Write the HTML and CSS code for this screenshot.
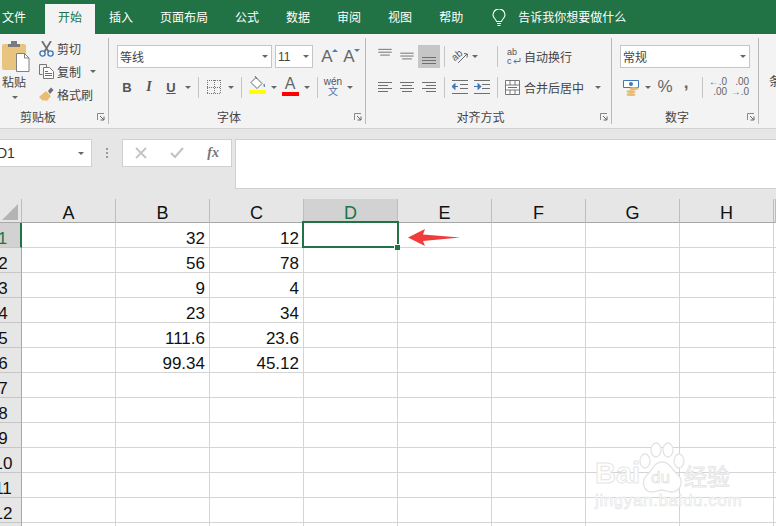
FILE: index.html
```html
<!DOCTYPE html>
<html lang="zh-CN">
<head>
    <meta charset="UTF-8">
    <title>Excel</title>
    <link rel="stylesheet" href="styles.css">
</head>
<body>
    <!-- Tabs -->
    <div class="tabs">
        <div class="tab tab-first">文件</div>
        <div class="tab tab-active">开始</div>
        <div class="tab">插入</div>
        <div class="tab">页面布局</div>
        <div class="tab">公式</div>
        <div class="tab">数据</div>
        <div class="tab">审阅</div>
        <div class="tab">视图</div>
        <div class="tab">帮助</div>
        <svg class="bulb" width="14" height="18" viewBox="0 0 14 18"><path d="M4.500 12.500C4 10 1 9 1 6a6 6 0 0 1 12 0c0 3-3 4-3.500 6.500z" fill="none" stroke="#fff" stroke-width="1.100"/><path d="M5 14.500h4M5.500 16.500h3" stroke="#fff" stroke-width="1.200"/></svg>
        <div class="tell">告诉我你想要做什么</div>
    </div>

    <!-- Ribbon -->
    <div class="ribbon">
        <div class="group group-clip">
            <div class="clip-body">
                <div class="paste">
                    <svg width="28" height="31" viewBox="0 0 28 31"><rect x="0" y="3" width="24" height="26" rx="2" fill="#e9c47f"/><path d="M6 6V3h3V0h6v3h3v3z" fill="#7b7b7b"/><path d="M14.500 12.500h8l4.500 4.500v13.500h-12.500z" fill="#fff" stroke="#808080"/><path d="M22.500 12.500v4.500h4.500" fill="none" stroke="#808080"/></svg>
                    <div class="paste-label">粘贴</div>
                    <span class="caret paste-caret"></span>
                </div>
                <div class="clip-list">
                    <div class="clip-row">
                        <svg width="15" height="16" viewBox="0 0 15 16"><path d="M3 0l6.500 10.500M12 0L5.500 10.500" stroke="#707070" stroke-width="1.800"/><circle cx="3.500" cy="12.500" r="2.600" fill="none" stroke="#3f78b5" stroke-width="1.400"/><circle cx="11.500" cy="12.500" r="2.600" fill="none" stroke="#3f78b5" stroke-width="1.400"/></svg>
                        <span>剪切</span>
                    </div>
                    <div class="clip-row">
                        <svg width="15" height="15" viewBox="0 0 15 15"><path d="M.5.500h7v3M.5.500v10h3" fill="none" stroke="#777"/><path d="M4.500 3.500h6l4 4v7h-10z" fill="#fff" stroke="#777"/><path d="M6 7.500h3M6 9.500h7M6 11.500h7" stroke="#3f78b5"/></svg>
                        <span>复制</span>
                        <span class="caret copy-caret"></span>
                    </div>
                    <div class="clip-row">
                        <svg width="15" height="15" viewBox="0 0 15 15"><path d="M0 10l7-6 5 5-4 5-3-1-1 1z" fill="#e6bd73"/><path d="M9 4l3-3.500 2.500 2.500L11 7z" fill="#6f6f6f"/></svg>
                        <span>格式刷</span>
                    </div>
                </div>
            </div>
            <div class="group-foot">
                <div class="group-name group-name-clip">剪贴板</div>
                <div class="launcher"><svg width="8" height="8" viewBox="0 0 8 8"><path d="M.5 7V.5H7" fill="none" stroke="#888"/><path d="M3 3l4 4M7 3.500V7H3.500" fill="none" stroke="#666"/></svg></div>
            </div>
        </div>

        <div class="group group-font">
            <div class="row row-top">
                <div class="select font-name"><span>等线</span><i class="caret"></i></div>
                <div class="select font-size"><span>11</span><i class="caret"></i></div>
                <div class="btn grow-a">A<i class="mini-up"></i></div>
                <div class="btn shrink-a">A<i class="mini-down"></i></div>
            </div>
            <div class="row row-bottom row-font">
                <div class="btn letter"><b>B</b></div>
                <div class="btn letter"><em>I</em></div>
                <div class="btn letter"><u>U</u></div>
                <div class="drop"><i class="caret"></i></div>
                <div class="sep"></div>
                <div class="btn">
                    <svg class="crisp" width="14" height="14" viewBox="0 0 14 14"><path d="M.5 0v14M13.500 0v14M7 0v14M0 .500h14M0 13.500h14M0 7h14" fill="none" stroke="#777" stroke-dasharray="1 1"/></svg>
                </div>
                <div class="drop"><i class="caret"></i></div>
                <div class="sep"></div>
                <div class="btn color-btn">
                    <svg width="17" height="13" viewBox="0 0 17 13"><path d="M7 1.500l6 6-5 5-6-6z" fill="#fff" stroke="#666"/><path d="M6 0l2 3" stroke="#666"/><path d="M15 7.500c1 1.500 1.500 2.500.5 3.500-1 0-1.500-2-.5-3.500z" fill="#3f78b5"/></svg>
                    <i class="bar bar-yellow"></i>
                </div>
                <div class="drop"><i class="caret"></i></div>
                <div class="btn color-btn color-a">
                    <span>A</span>
                    <i class="bar bar-red"></i>
                </div>
                <div class="drop"><i class="caret"></i></div>
                <div class="sep"></div>
                <div class="btn wen"><span>wén</span><span class="wen-zi">文</span></div>
                <div class="drop"><i class="caret"></i></div>
            </div>
            <div class="group-foot">
                <div class="group-name">字体</div>
                <div class="launcher"><svg width="8" height="8" viewBox="0 0 8 8"><path d="M.5 7V.5H7" fill="none" stroke="#888"/><path d="M3 3l4 4M7 3.500V7H3.500" fill="none" stroke="#666"/></svg></div>
            </div>
        </div>

        <div class="group group-align">
            <div class="row row-top">
                <div class="btn"><svg width="14" height="23" viewBox="0 0 14 23"><path d="M0 3.500h14M0 6.500h14M2 9.500h10" stroke="#6f6f6f"/></svg></div>
                <div class="btn"><svg width="14" height="23" viewBox="0 0 14 23"><path d="M0 7.500h14M0 10.500h14M2 13.500h10" stroke="#6f6f6f"/></svg></div>
                <div class="btn btn-on"><svg width="14" height="23" viewBox="0 0 14 23"><path d="M0 12.500h14M0 15.500h14M0 18.500h14" stroke="#6f6f6f"/></svg></div>
                <div class="sep"></div>
                <div class="btn"><svg width="17" height="17" viewBox="0 0 17 17"><text x="0" y="10" class="orient" transform="rotate(-40 6 8)">ab</text><path d="M6 15L15 6M12 5.500l3.500.500-.5 3.500" fill="none" stroke="#666"/></svg></div>
                <div class="drop drop-tight"><i class="caret"></i></div>
                <div class="sep sep-push"></div>
                <div class="btn-text wrap-text">
                    <svg width="14" height="17" viewBox="0 0 14 17"><text x="0" y="7" class="abc">ab</text><text x="0" y="16" class="abc">c</text><path d="M13 10v3.500H7M9 11.500l-2 2 2 2" fill="none" stroke="#3f78b5"/></svg>
                    <span>自动换行</span>
                </div>
            </div>
            <div class="row row-bottom">
                <div class="btn"><svg width="14" height="12" viewBox="0 0 14 12"><path d="M0 1.500h14M0 4.500h10M0 7.500h14M0 10.500h10" stroke="#6f6f6f"/></svg></div>
                <div class="btn"><svg width="14" height="12" viewBox="0 0 14 12"><path d="M0 1.500h14M2 4.500h10M0 7.500h14M2 10.500h10" stroke="#6f6f6f"/></svg></div>
                <div class="btn"><svg width="14" height="12" viewBox="0 0 14 12"><path d="M0 1.500h14M4 4.500h10M0 7.500h14M4 10.500h10" stroke="#6f6f6f"/></svg></div>
                <div class="sep"></div>
                <div class="btn"><svg width="16" height="14" viewBox="0 0 16 14"><path d="M0 .500h16M8 4.500h8M8 8.500h8M0 13.500h16" stroke="#6f6f6f"/><path d="M0 6.500h6M3 3.500l-3 3 3 3z" stroke="#3f78b5" fill="#3f78b5"/></svg></div>
                <div class="btn"><svg width="16" height="14" viewBox="0 0 16 14"><path d="M0 .500h16M8 4.500h8M8 8.500h8M0 13.500h16" stroke="#6f6f6f"/><path d="M0 6.500h5M4 3.500l3 3-3 3z" stroke="#3f78b5" fill="#3f78b5"/></svg></div>
                <div class="sep"></div>
                <div class="btn-text merge-text">
                    <svg width="15" height="15" viewBox="0 0 15 15"><path d="M.5.500h14v14H.500zM.5 5h14M.5 10h14M5 .500V5M10 .500V5M5 10v4.500M10 10v4.500" fill="#fff" stroke="#777"/><path d="M3 7.500h9" stroke="#3f78b5"/></svg>
                    <span>合并后居中</span>
                </div>
                <div class="drop drop-merge"><i class="caret"></i></div>
            </div>
            <div class="group-foot">
                <div class="group-name">对齐方式</div>
                <div class="launcher"><svg width="8" height="8" viewBox="0 0 8 8"><path d="M.5 7V.5H7" fill="none" stroke="#888"/><path d="M3 3l4 4M7 3.500V7H3.500" fill="none" stroke="#666"/></svg></div>
            </div>
        </div>

        <div class="group group-number">
            <div class="row row-top">
                <div class="select number-format"><span>常规</span><i class="caret"></i></div>
            </div>
            <div class="row row-bottom">
                <div class="btn">
                    <svg width="17" height="17" viewBox="0 0 17 17"><path d="M.5 1.500h15v7H.5z" fill="#fff" stroke="#3f78b5"/><circle cx="8" cy="5" r="2" fill="#3f78b5"/><ellipse cx="11" cy="9.500" rx="4.500" ry="1.500" fill="#e6bd73"/><ellipse cx="8" cy="12.500" rx="4.500" ry="1.500" fill="#e6bd73"/><ellipse cx="8" cy="15.500" rx="4.500" ry="1.500" fill="#e6bd73"/></svg>
                </div>
                <div class="drop"><i class="caret"></i></div>
                <div class="btn percent">%</div>
                <div class="btn comma">,</div>
                <div class="sep"></div>
                <div class="btn">
                    <div class="dec"><span class="dec-top"><i class="dec-left">←</i>.0</span><span>.00</span></div>
                </div>
                <div class="btn">
                    <div class="dec"><span>.00</span><span class="dec-top"><i class="dec-left">→</i>.0</span></div>
                </div>
            </div>
            <div class="group-foot">
                <div class="group-name">数字</div>
                <div class="launcher"><svg width="8" height="8" viewBox="0 0 8 8"><path d="M.5 7V.5H7" fill="none" stroke="#888"/><path d="M3 3l4 4M7 3.500V7H3.500" fill="none" stroke="#666"/></svg></div>
            </div>
        </div>

        <div class="group-cut">条</div>
    </div>

    <!-- Formula bar -->
    <div class="formula-bar">
        <div class="name-box"><span>D1</span><i class="caret"></i></div>
        <div class="dots"></div>
        <div class="fx-box">
            <svg width="12" height="12" viewBox="0 0 12 12"><path d="M1 1l10 10M11 1L1 11" stroke="#c4c4c4" stroke-width="1.800"/></svg>
            <svg width="14" height="12" viewBox="0 0 14 12"><path d="M1 6l4 4 8-9" fill="none" stroke="#c4c4c4" stroke-width="2.200"/></svg>
            <span class="fx">fx</span>
        </div>
        <div class="formula-input"></div>
    </div>

    <!-- Sheet -->
    <div class="sheet">
        <div class="corner"><i class="corner-mark"></i></div><div class="col">A</div><div class="col">B</div><div class="col">C</div><div class="col col-on">D</div><div class="col">E</div><div class="col">F</div><div class="col">G</div><div class="col">H</div><div class="col"></div>
        <div class="rh rh-on">1</div><div></div><div>32</div><div>12</div><div class="active-cell"><i class="handle"></i></div><div></div><div></div><div></div><div></div><div></div>
        <div class="rh">2</div><div></div><div>56</div><div>78</div><div></div><div></div><div></div><div></div><div></div><div></div>
        <div class="rh">3</div><div></div><div>9</div><div>4</div><div></div><div></div><div></div><div></div><div></div><div></div>
        <div class="rh">4</div><div></div><div>23</div><div>34</div><div></div><div></div><div></div><div></div><div></div><div></div>
        <div class="rh">5</div><div></div><div>111.6</div><div>23.6</div><div></div><div></div><div></div><div></div><div></div><div></div>
        <div class="rh">6</div><div></div><div>99.34</div><div>45.12</div><div></div><div></div><div></div><div></div><div></div><div></div>
        <div class="rh">7</div><div></div><div></div><div></div><div></div><div></div><div></div><div></div><div></div><div></div>
        <div class="rh">8</div><div></div><div></div><div></div><div></div><div></div><div></div><div></div><div></div><div></div>
        <div class="rh">9</div><div></div><div></div><div></div><div></div><div></div><div></div><div></div><div></div><div></div>
        <div class="rh">10</div><div></div><div></div><div></div><div></div><div></div><div></div><div></div><div></div><div></div>
        <div class="rh">11</div><div></div><div></div><div></div><div></div><div></div><div></div><div></div><div></div><div></div>
        <div class="rh">12</div><div></div><div></div><div></div><div></div><div></div><div></div><div></div><div></div><div></div>
        <div class="rh"></div><div></div><div></div><div></div><div></div><div></div><div></div><div></div><div></div><div></div>
    </div>

    <!-- Red arrow drawn over the sheet -->
    <svg class="arrow" width="54" height="18" viewBox="0 0 54 18"><path d="M0 8.500L17 0l-2 5.500L52 8.500 15 12l2 5z" fill="#f23b3b"/></svg>

    <!-- Watermark -->
    <div class="watermark">
        <svg class="paw" width="50" height="56" viewBox="0 0 50 56"><g fill="#fff" stroke="#e4e4e4" stroke-width="1.300"><ellipse cx="6" cy="19" rx="5" ry="7"/><ellipse cx="17" cy="8" rx="5" ry="7"/><ellipse cx="29" cy="8" rx="5" ry="7"/><ellipse cx="40" cy="19" rx="5" ry="7"/><path d="M23 20c8 0 10 8 16 13 6 6 3 17-7 17-4 0-6-2-9-2s-6 2-10 2C4 50 2 39 8 33c6-5 7-13 15-13z"/></g></svg>
        <span class="wm-bai">Bai</span><span class="wm-du">du</span><span class="wm-jy">经验</span>
        <div class="wm-url">jingyan.baidu.com</div>
    </div>
</body>
</html>
```

FILE: styles.css
```css
body {
    margin: 0;
    width: 776px;
    height: 526px;
    overflow: hidden;
    position: relative;
    background-color: #e6e6e6;
    font-family: "Liberation Sans", "Noto Sans CJK SC", sans-serif;
    font-size: 12px;
    color: #444;
}
i { font-style: normal; }

/* Tabs */
.tabs {
    display: flex;
    height: 34px;
    background-color: #217346;
    color: #fff;
}
.tab {
    padding: 0 13px;
    margin-right: 1px;
    line-height: 36px;
    white-space: nowrap;
}
.tab-first { margin-left: -11px; margin-right: 6px; }
.tab-active {
    margin-top: 4px;
    height: 30px;
    line-height: 28px;
    background-color: #f3f3f3;
    color: #217346;
}
.bulb { margin: 9px 0 0 15px; }
.tell { margin-left: 12px; line-height: 36px; }

/* Ribbon */
.ribbon {
    display: flex;
    height: 95px;
    padding-top: 4px;
    box-sizing: border-box;
    background-color: #f3f3f3;
    border-bottom: 1px solid #d2d2d2;
}
.group {
    display: flex;
    flex-direction: column;
    flex-shrink: 0;
    height: 86px;
    box-sizing: border-box;
    border-right: 1px solid #b9b9b9;
}
.group-clip { width: 109px; }
.group-font { width: 257px; }
.group-align { width: 246px; }
.group-number { width: 147px; }
.group-cut { margin: 36px 0 0 10px; line-height: 16px; white-space: nowrap; }

.group-foot {
    display: flex;
    margin-top: auto;
    height: 14px;
    line-height: 16px;
}
.group-name { flex: 1; text-align: center; }
.group-name-clip { padding-right: 16px; }
.launcher { width: 11px; padding-left: 5px; }
.launcher svg { display: block; margin-top: 3px; }

.row { display: flex; align-items: center; }
.row-top { height: 23px; margin-top: 7px; }
.row-bottom { height: 22px; margin-top: 8px; }
.group-font .row-top { padding-left: 8px; }
.row-font { padding-left: 7px; }
.group-align .row { padding-left: 8px; }
.group-number .row { padding-left: 8px; }

.caret {
    display: inline-block;
    width: 0;
    height: 0;
    border-left: 3px solid transparent;
    border-right: 3px solid transparent;
    border-top: 3px solid #666;
}
.btn {
    display: flex;
    flex-direction: column;
    align-items: center;
    justify-content: center;
    width: 22px;
    height: 22px;
    flex-shrink: 0;
}
.btn-on { height: 23px; background-color: #c6c6c6; }
.crisp { shape-rendering: crispEdges; }
.drop {
    display: flex;
    justify-content: center;
    align-items: center;
    width: 11px;
    height: 22px;
}
.drop-tight { width: 7px; }
.drop-merge { margin-left: 8px; }
.sep {
    width: 1px;
    height: 21px;
    margin: 0 4px 0 5px;
    background-color: #c6c6c6;
}
.group-align .sep { margin-left: 4px; margin-right: 4px; width: 1px; }
.group-align .sep-push { margin-left: 19px; }
.btn-text { display: flex; align-items: center; white-space: nowrap; font-size: 12px; }
.wrap-text { margin-left: 5px; gap: 3px; }
.merge-text { margin-left: 3px; gap: 4px; }

.select {
    display: flex;
    align-items: center;
    justify-content: space-between;
    box-sizing: border-box;
    height: 23px;
    padding: 0 3px 0 2px;
    background-color: #fff;
    border: 1px solid #c6c6c6;
    color: #444;
}
.font-name { width: 155px; }
.font-size { width: 38px; margin: 0 3px; }
.number-format { width: 130px; }

/* Clipboard */
.clip-body { display: flex; }
.paste { width: 32px; padding-top: 3px; }
.paste svg { display: block; margin-left: 2px; }
.paste-label { margin: 3px 0 0 2px; line-height: 16px; }
.paste-caret { display: block; margin: 5px 0 0 12px; }
.clip-list { margin-left: 7px; }
.clip-row { display: flex; align-items: center; gap: 3px; height: 23px; white-space: nowrap; }
.clip-row:first-child { margin-top: -1px; }
.copy-caret { margin-left: 6px; }

/* Font */
.grow-a, .shrink-a { position: relative; font-size: 17px; color: #666; line-height: 22px; }
.mini-up, .mini-down {
    position: absolute;
    top: 3px;
    right: 0;
    border-left: 3px solid transparent;
    border-right: 3px solid transparent;
}
.mini-up { border-bottom: 3px solid #4a7ebb; }
.mini-down { border-top: 3px solid #4a7ebb; }
.letter { font-size: 13px; color: #555; }
.letter b, .letter em { font-weight: bold; }
.letter em { font-family: "Liberation Serif", serif; font-size: 14px; }
.letter u { font-weight: bold; }
.color-btn { justify-content: flex-start; }
.bar { display: block; width: 17px; height: 4px; margin-top: 1px; }
.bar-yellow { background-color: #ffff00; }
.bar-red { background-color: #ff0000; }
.color-a { font-size: 16px; line-height: 15px; color: #666; }
.wen { font-size: 10px; line-height: 10px; color: #555; }
.wen-zi { color: #3f78b5; font-size: 10px; }

/* Alignment */
.orient { font-size: 10px; fill: #555; }
.abc { font-size: 9px; fill: #555; }

/* Number */
.percent { margin-left: 1px; font-size: 17px; color: #666; }
.comma {
    margin-left: -1px;
    box-sizing: border-box;
    padding-bottom: 8px;
    font-size: 17px;
    font-weight: bold;
    color: #666;
    line-height: 14px;
}
.dec { display: flex; flex-direction: column; align-items: flex-end; font-size: 10px; line-height: 10px; color: #666; }
.dec-top { white-space: nowrap; }
.dec-left { color: #3f78b5; font-weight: bold; }

/* Formula bar */
.formula-bar { display: flex; align-items: flex-start; margin-top: 10px; height: 50px; }
.name-box {
    display: flex;
    align-items: center;
    justify-content: space-between;
    box-sizing: border-box;
    width: 100px;
    height: 28px;
    margin-left: -8px;
    padding: 0 7px 0 4px;
    background-color: #fff;
    border: 1px solid #d0d0d0;
    font-size: 14px;
    color: #333;
}
.dots {
    width: 2px;
    height: 10px;
    margin: 9px 14px 0 14px;
    background-image: repeating-linear-gradient(#999 0 2px, transparent 2px 4px);
}
.fx-box {
    display: flex;
    align-items: center;
    box-sizing: border-box;
    width: 110px;
    height: 28px;
    padding: 0 12px;
    justify-content: space-between;
    background-color: #fff;
    border: 1px solid #d0d0d0;
}
.fx { font-family: "Liberation Serif", serif; font-style: italic; font-weight: bold; font-size: 14px; color: #777; }
.formula-input {
    flex: 1;
    height: 50px;
    box-sizing: border-box;
    margin-left: 3px;
    background-color: #fff;
    border: 1px solid #d0d0d0;
    border-right: none;
}

/* Sheet */
.sheet {
    display: grid;
    grid-template-columns: 37px repeat(8, 94px) 2px;
    grid-template-rows: 24px repeat(13, 25px);
    margin: 10px 0 0 -15px;
    background-color: #fff;
}
.sheet > div {
    box-sizing: border-box;
    display: flex;
    align-items: flex-end;
    justify-content: flex-end;
    padding: 0 4px 0 0;
    border-right: 1px solid #d4d4d4;
    border-bottom: 1px solid #d4d4d4;
    font-size: 17px;
    line-height: 16px;
    color: #111;
}
.sheet > .corner {
    position: relative;
    background-color: #e6e6e6;
    border-right: 1px solid #bdbdbd;
    border-bottom: 1px solid #a8a8a8;
    padding: 0;
}
.corner-mark {
    position: absolute;
    right: 3px;
    bottom: 2px;
    width: 0;
    height: 0;
    border-left: 16px solid transparent;
    border-bottom: 16px solid #b4b4b4;
}
.sheet > .col {
    justify-content: center;
    padding: 0;
    background-color: #e6e6e6;
    border-right: 1px solid #bdbdbd;
    border-bottom: 1px solid #a8a8a8;
    font-size: 18px;
    line-height: 18px;
}
.sheet > .col-on { background-color: #d2d2d2; color: #217346; }
.sheet > .rh {
    justify-content: center;
    padding: 0;
    background-color: #e6e6e6;
    border-right: 1px solid #a8a8a8;
    border-bottom: 1px solid #c6c6c6;
}
.sheet > .rh-on {
    background-color: #d2d2d2;
    color: #217346;
    border-right: 2px solid #217346;
}
.sheet > .active-cell { position: relative; }
.active-cell::before {
    content: "";
    position: absolute;
    left: -2px;
    top: -2px;
    width: 97px;
    height: 27px;
    box-sizing: border-box;
    border: 2px solid #217346;
}
.handle {
    position: absolute;
    right: -3px;
    bottom: -3px;
    width: 5px;
    height: 5px;
    background-color: #217346;
    border: 1px solid #fff;
    border-right: none;
    border-bottom: none;
}

/* Overlays */
.arrow { position: absolute; left: 408px; top: 229px; }
.watermark {
    position: absolute;
    left: 595px;
    top: 442px;
    width: 140px;
    height: 70px;
    color: #fff;
    -webkit-text-stroke: 1px #e6e6e6;
    white-space: nowrap;
}
.paw { position: absolute; left: 44px; top: 0; }
.wm-bai { position: absolute; left: 0; top: 14px; font-size: 29px; line-height: 34px; font-weight: bold; }
.wm-du { position: absolute; left: 56px; top: 26px; font-size: 17px; line-height: 20px; -webkit-text-stroke: .7px #e0e0e0; }
.wm-jy { position: absolute; left: 89px; top: 21px; font-size: 23px; line-height: 28px; }
.wm-url { position: absolute; left: 0; top: 49px; font-size: 17px; line-height: 20px; letter-spacing: .6px; -webkit-text-stroke: .7px #e6e6e6; }
```
